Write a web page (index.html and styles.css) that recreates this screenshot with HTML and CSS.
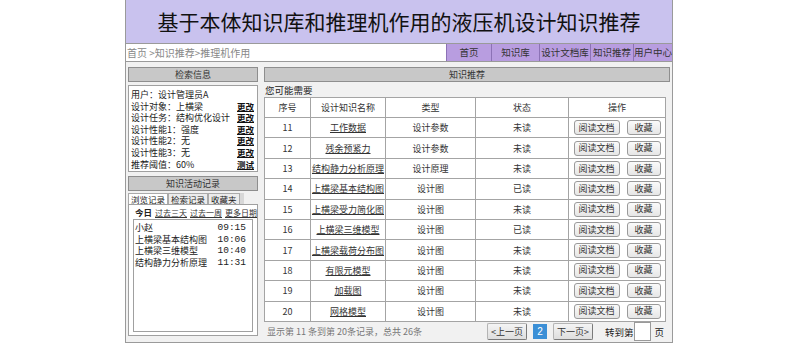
FILE: index.html
```html
<!DOCTYPE html>
<html lang="zh-CN">
<head>
    <meta charset="UTF-8">
    <meta name="viewport" content="width=device-width, initial-scale=1.0">
    <title>知识推荐</title>
    <link rel="stylesheet" href="styles.css">
</head>
<body>
    <div class="page">
        <div class="banner">基于本体知识库和推理机作用的液压机设计知识推荐</div>

        <div class="navbar">
            <div class="crumb">首页 &gt;知识推荐&gt;推理机作用</div>
            <ul class="menu">
                <li class="m1">首页</li>
                <li class="m2">知识库</li>
                <li class="m3">设计文档库</li>
                <li class="m4">知识推荐</li>
                <li class="m5">用户中心</li>
            </ul>
        </div>

        <div class="content">
            <!-- 左侧 -->
            <div class="side">
                <div class="bar">检索信息</div>
                <div class="info">
                    <div class="line">用户：设计管理员A</div>
                    <div class="line"><span>设计对象：上横梁</span><a href="#">更改</a></div>
                    <div class="line"><span>设计任务：结构优化设计</span><a href="#">更改</a></div>
                    <div class="line"><span>设计性能1：强度</span><a href="#">更改</a></div>
                    <div class="line"><span>设计性能2：无</span><a href="#">更改</a></div>
                    <div class="line"><span>设计性能3：无</span><a href="#">更改</a></div>
                    <div class="line"><span>推荐阈值：60%</span><a href="#">测试</a></div>
                </div>

                <div class="bar bar2">知识活动记录</div>
                <div class="tabs">
                    <span class="tab active">浏览记录</span>
                    <span class="tab">检索记录</span>
                    <span class="tab">收藏夹</span>
                </div>
                <div class="history">
                    <div class="dates">
                        <b>今日</b>
                        <a href="#">过去三天</a>
                        <a href="#">过去一周</a>
                        <a href="#">更多日期</a>
                    </div>
                    <div class="list">
                        <div class="item"><span>小赵</span><span class="time">09:15</span></div>
                        <div class="item"><span>上横梁基本结构图</span><span class="time">10:06</span></div>
                        <div class="item"><span>上横梁三维模型</span><span class="time">10:40</span></div>
                        <div class="item"><span>结构静力分析原理</span><span class="time">11:31</span></div>
                    </div>
                </div>
            </div>

            <!-- 右侧 -->
            <div class="main">
                <div class="bar">知识推荐</div>
                <div class="hint">您可能需要</div>
                <table>
                    <thead>
                        <tr>
                            <th class="c1">序号</th>
                            <th class="c2">设计知识名称</th>
                            <th class="c3">类型</th>
                            <th class="c4">状态</th>
                            <th class="c5">操作</th>
                        </tr>
                    </thead>
                    <tbody id="rankTable"></tbody>
                </table>
                <div class="foot">
                    <span class="total">显示第 11 条到第 20条记录，总共 26条</span>
                    <div class="pager">
                        <button class="pbtn">&lt;上一页</button>
                        <span class="cur">2</span>
                        <button class="pbtn">下一页&gt;</button>
                        <span class="goto">转到第</span>
                        <input type="text" class="pageno">
                        <span class="ye">页</span>
                    </div>
                </div>
            </div>
        </div>
    </div>

    <script>
        const rows = [
            [11, '工作数据', '设计参数', '未读'],
            [12, '残余预紧力', '设计参数', '未读'],
            [13, '结构静力分析原理', '设计原理', '未读'],
            [14, '上横梁基本结构图', '设计图', '已读'],
            [15, '上横梁受力简化图', '设计图', '未读'],
            [16, '上横梁三维模型', '设计图', '已读'],
            [17, '上横梁载荷分布图', '设计图', '未读'],
            [18, '有限元模型', '设计图', '未读'],
            [19, '加载图', '设计图', '未读'],
            [20, '网格模型', '设计图', '未读']
        ];

        const table = document.getElementById("rankTable");
        rows.forEach(r => {
            const tr = table.insertRow();
            tr.insertCell(0).textContent = r[0];
            tr.insertCell(1).innerHTML = '<a href="#">' + r[1] + '</a>';
            tr.insertCell(2).textContent = r[2];
            tr.insertCell(3).textContent = r[3];
            tr.insertCell(4).innerHTML = '<button class="btn-read">阅读文档</button><button class="btn-fav">收藏</button>';
        });
    </script>
</body>
</html>
```

FILE: styles.css
```css
body {
    margin: 0;
    padding: 0;
    background-color: #fff;
    font-family: "Noto Sans CJK SC", "Noto Sans", sans-serif;
    color: #222;
}

.page {
    width: 546px;
    margin: 0 0 0 125px;
    border: 1px solid #9a9a9a;
    border-top: none;
}

.banner {
    height: 43px;
    line-height: 43px;
    background-color: #c9c2ee;
    text-align: center;
    font-size: 21px;
    color: #111;
}

.navbar {
    display: flex;
    height: 17px;
    border-top: 1px solid #9a9a9a;
    border-bottom: 1px solid #9a9a9a;
    background-color: #fff;
}

.crumb {
    flex: 1;
    font-size: 10px;
    line-height: 17px;
    color: #888;
    padding-left: 1px;
}

.menu {
    display: flex;
    list-style: none;
    margin: 0;
    padding: 0;
}

.menu li {
    background-color: #b89de0;
    border-left: 1px solid #8c72b6;
    font-size: 9.5px;
    line-height: 17px;
    text-align: center;
    color: #333;
    white-space: nowrap;
}

.m1 { width: 44px; }
.m2 { width: 47px; }
.m3 { width: 50px; }
.m4 { width: 42px; }
.m5 { width: 38px; }

.content {
    display: flex;
    gap: 5px;
    height: 275px;
    padding: 5px 1px 0 2px;
    background-color: #f1f1f1;
}

.side {
    width: 130px;
    display: flex;
    flex-direction: column;
    white-space: nowrap;
}

.bar {
    height: 13px;
    line-height: 13px;
    background-color: #c8c8c8;
    border: 1px solid #8e8e8e;
    text-align: center;
    font-size: 9px;
    color: #333;
}

.info {
    margin-top: 3px;
    height: 81px;
    padding: 3px 3px 1px 2px;
    background-color: #fff;
    border: 1px solid #a0a0a0;
    font-size: 9px;
}

.line {
    display: flex;
    justify-content: space-between;
    height: 11.6px;
    line-height: 11.6px;
}

.line a {
    color: #111;
    font-size: 8.5px;
    font-weight: bold;
}

.bar2 {
    margin-top: 4px;
}

.tabs {
    display: flex;
    width: 116px;
    height: 11px;
    margin-top: 2px;
    background-color: #d8d8d8;
}

.tab {
    font-size: 8.5px;
    line-height: 10px;
    padding: 0 2px;
    border: 1px solid #aaa;
    border-bottom: none;
    background-color: #ececec;
}

.tab.active {
    background-color: #fff;
}

.history {
    flex: none;
    height: 124px;
    padding: 2px 4px 4px 4px;
    background-color: #fff;
    border: 1px solid #a0a0a0;
}

.dates {
    display: flex;
    gap: 3px;
    font-size: 8px;
    line-height: 11px;
    padding-left: 2px;
}

.dates b {
    font-size: 8.5px;
}

.dates a {
    color: #333;
}

.list {
    height: 109px;
    margin-top: 1px;
    padding: 2px 6px 0 1px;
    border: 1px solid #a0a0a0;
}

.item {
    display: flex;
    justify-content: space-between;
    font-size: 9px;
    line-height: 11.7px;
}

.time {
    font-family: "Liberation Mono", monospace;
    font-size: 9.5px;
}

.main {
    width: 406px;
    padding: 0 1px;
    display: flex;
    flex-direction: column;
}

.hint {
    height: 15px;
    line-height: 17px;
    font-size: 9.5px;
    padding-left: 1px;
}

table {
    width: 402px;
    border-collapse: collapse;
    background-color: #fff;
    font-size: 9px;
    color: #333;
}

th, td {
    border: 1px solid #a4a4a4;
    padding: 0;
    text-align: center;
    font-weight: normal;
    white-space: nowrap;
}

thead tr {
    height: 20px;
}

tbody tr {
    height: 20.4px;
}

.c1 { width: 45px; }
.c2 { width: 74px; }
.c3 { width: 89px; }
.c4 { width: 92px; }

td a {
    color: #333;
}

.btn-read, .btn-fav, .pbtn {
    height: 15px;
    padding: 0;
    font-family: "Noto Sans CJK SC", sans-serif;
    font-size: 9px;
    line-height: 12px;
    color: #333;
    background: linear-gradient(#fafafa, #e6e6e6);
    border: 1px solid #9a9a9a;
    border-radius: 3px;
    vertical-align: middle;
}

.btn-read {
    width: 46px;
}

.btn-fav {
    width: 34px;
    margin-left: 7px;
}

.foot {
    display: flex;
    justify-content: space-between;
    align-items: center;
    height: 21px;
}

.total {
    font-size: 9px;
    color: #777;
    padding-left: 3px;
}

.pager {
    display: flex;
    align-items: center;
    font-size: 9.5px;
    padding-right: 2px;
}

.pbtn {
    width: 40px;
    height: 17px;
    border-radius: 2px;
    border-color: #b4b4b4 #7a7a7a #7a7a7a #b4b4b4;
    background: linear-gradient(#f4f4f4, #dedede);
}

.cur {
    width: 14px;
    height: 15px;
    margin: 0 6px;
    background-color: #3b8fd6;
    color: #fff;
    text-align: center;
    line-height: 15px;
    font-size: 10px;
    font-family: "Liberation Sans", sans-serif;
}

.goto {
    margin-left: 12px;
}

.pageno {
    width: 15px;
    height: 17px;
    padding: 0;
    margin: 0 3px 0 1px;
    border: 1px solid #9a9a9a;
    background-color: #fff;
}

.ye {
    margin-right: 4px;
}
```
